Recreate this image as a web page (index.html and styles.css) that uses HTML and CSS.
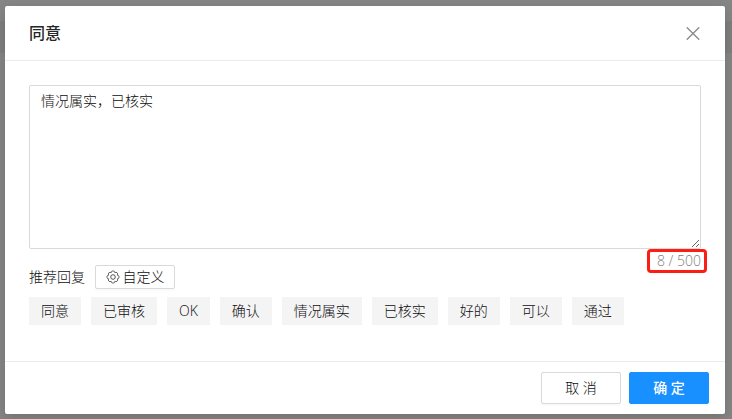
FILE: index.html
```html
<!DOCTYPE html>
<html lang="zh-CN">
<head>
    <meta charset="UTF-8">
    <meta name="viewport" content="width=device-width, initial-scale=1.0">
    <title>同意</title>
    <link rel="stylesheet" href="styles.css">
</head>
<body>
    <div class="modal" role="dialog" aria-labelledby="modal-title">
        <div class="modal-header">
            <h1 class="modal-title" id="modal-title">同意</h1>
            <button class="close-btn" type="button" aria-label="关闭">
                <svg width="14" height="14" viewBox="0 0 14 14" fill="none" stroke="currentColor" stroke-width="1.4" stroke-linecap="round">
                    <path d="M1.2 1.7 12.8 13.3M12.8 1.7 1.2 13.3"/>
                </svg>
            </button>
        </div>

        <div class="modal-body">
            <textarea class="reply-input" id="reply" aria-label="审批意见" maxlength="500">情况属实，已核实</textarea>

            <div class="reply-bar">
                <div class="reply-tools">
                    <span class="reply-label">推荐回复</span>
                    <button class="btn btn-small" type="button">
                        <svg width="14" height="14" viewBox="0 0 14 14" fill="none" stroke="#444" stroke-width="0.9">
                            <path stroke-linejoin="round" d="M11.8 5a2 2 0 0 1 0 4a2 2 0 0 1-2.8 2.8a2 2 0 0 1-4 0a2 2 0 0 1-2.8-2.8a2 2 0 0 1 0-4a2 2 0 0 1 2.8-2.8a2 2 0 0 1 4 0a2 2 0 0 1 2.8 2.8z" transform="translate(.7 .7) scale(.9)"/>
                            <circle cx="7" cy="7" r="2.3"/>
                        </svg>
                        <span>自定义</span>
                    </button>
                </div>
                <div class="reply-count">8 / 500</div>
            </div>

            <div class="tag-list">
                <button class="tag" type="button">同意</button>
                <button class="tag" type="button">已审核</button>
                <button class="tag" type="button">OK</button>
                <button class="tag" type="button">确认</button>
                <button class="tag" type="button">情况属实</button>
                <button class="tag" type="button">已核实</button>
                <button class="tag" type="button">好的</button>
                <button class="tag" type="button">可以</button>
                <button class="tag" type="button">通过</button>
            </div>
        </div>

        <div class="modal-footer">
            <button class="btn" type="button">取 消</button>
            <button class="btn btn-primary" type="button">确 定</button>
        </div>
    </div>
</body>
</html>
```

FILE: styles.css
```css
* {
    margin: 0;
    padding: 0;
    box-sizing: border-box;
}

body {
    min-height: 100vh;
    padding: 6px 7px 5px 5px;
    background: linear-gradient(#858585 21px, #7e7e7e 21px, #7e7e7e 53px, #858585 53px);
    color: #0d0d0d;
    font-family: "Open Sans", "Noto Sans CJK SC", sans-serif;
    font-size: 14px;
    font-weight: 300;
    line-height: 22px;
}

button,
textarea {
    color: inherit;
    font: inherit;
}

button {
    cursor: pointer;
}

.modal {
    background: #fff;
    border-radius: 2px;
    box-shadow: 0 4px 12px rgba(0, 0, 0, 0.15);
}

.modal-header {
    display: flex;
    justify-content: space-between;
    align-items: center;
    padding: 16px 24px;
    border-bottom: 1px solid #ebebeb;
}

.modal-title {
    color: #262626;
    font-size: 16px;
    font-weight: 500;
    line-height: 22px;
}

.close-btn {
    display: flex;
    padding: 1px;
    border: none;
    background: none;
    color: #8c8c8c;
}

.modal-body {
    padding: 24px 24px 36px;
}

.reply-input {
    display: block;
    width: 100%;
    height: 164px;
    padding: 4px 11px;
    border: 1px solid #d9d9d9;
    border-radius: 2px;
    outline: none;
    resize: vertical;
}

.reply-bar {
    display: flex;
    justify-content: space-between;
    align-items: flex-start;
}

.reply-tools {
    display: flex;
    align-items: center;
    gap: 10px;
    margin-top: 16px;
}

/* 字数统计，红框标出，向右超出输入框 */
.reply-count {
    margin-right: -6px;
    padding: 0 3px 0 7px;
    border: 3px solid #fa1e14;
    border-radius: 4px;
    color: #808080;
    line-height: 18px;
}

.tag-list {
    display: flex;
    flex-wrap: wrap;
    gap: 10px;
    margin-top: 8px;
}

.tag {
    padding: 3px 12px;
    border: none;
    background: #f4f4f4;
}

.modal-footer {
    display: flex;
    justify-content: flex-end;
    gap: 8px;
    padding: 10px 16px;
    border-top: 1px solid #ebebeb;
}

.btn {
    min-width: 80px;
    height: 32px;
    padding: 0 9px;
    border: 1px solid #d9d9d9;
    border-radius: 2px;
    background: #fff;
    box-shadow: 0 2px 0 rgba(0, 0, 0, 0.02);
}

.btn-small {
    display: flex;
    align-items: center;
    justify-content: center;
    gap: 3px;
    height: 24px;
}

.btn-primary {
    border-color: #1890ff;
    background: #1890ff;
    color: #fff;
    font-weight: 500;
}
```
